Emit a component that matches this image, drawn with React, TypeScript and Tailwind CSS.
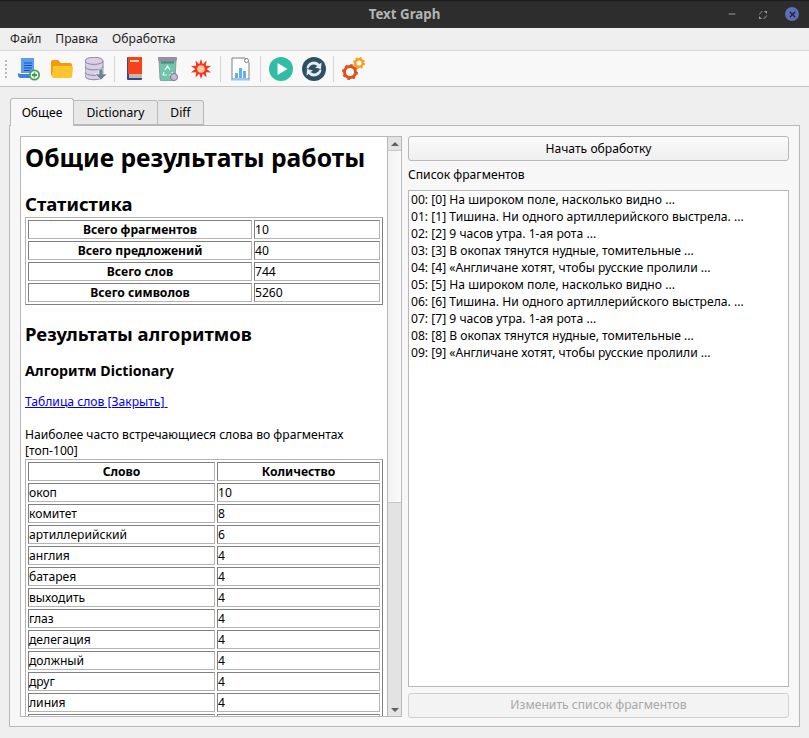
import { Minus, X } from "lucide-react";

const stats = [
  ["Всего фрагментов", "10"],
  ["Всего предложений", "40"],
  ["Всего слов", "744"],
  ["Всего символов", "5260"],
];

const words = [
  ["окоп", "10"],
  ["комитет", "8"],
  ["артиллерийский", "6"],
  ["англия", "4"],
  ["батарея", "4"],
  ["выходить", "4"],
  ["глаз", "4"],
  ["делегация", "4"],
  ["должный", "4"],
  ["друг", "4"],
  ["линия", "4"],
  ["\u00a0", "\u00a0"],
];

const fragments = [
  "00: [0] На широком поле, насколько видно ...",
  "01: [1] Тишина. Ни одного артиллерийского выстрела. ...",
  "02: [2] 9 часов утра. 1-ая рота ...",
  "03: [3] В окопах тянутся нудные, томительные ...",
  "04: [4] «Англичане хотят, чтобы русские пролили ...",
  "05: [5] На широком поле, насколько видно ...",
  "06: [6] Тишина. Ни одного артиллерийского выстрела. ...",
  "07: [7] 9 часов утра. 1-ая рота ...",
  "08: [8] В окопах тянутся нудные, томительные ...",
  "09: [9] «Англичане хотят, чтобы русские пролили ...",
];

const cell =
  "h-[19px] p-0 text-[12.13px] leading-[17px] border border-t-[#808080] border-l-[#808080] border-b-[#b4b4b4] border-r-[#b4b4b4]";

function DataTable({ rows, head, w1, w2 }: { rows: string[][]; head?: string[]; w1: string; w2: string }) {
  return (
    <table className="border-separate border-spacing-[2px] border border-t-[#b4b4b4] border-l-[#b4b4b4] border-b-[#808080] border-r-[#808080] w-[358px] table-fixed">
      <colgroup>
        <col className={w1} />
        <col className={w2} />
      </colgroup>
      <tbody>
        {head && (
          <tr>
            {head.map((h) => (
              <th key={h} className={cell + " text-center font-bold"}>
                {h}
              </th>
            ))}
          </tr>
        )}
        {rows.map((r, i) => (
          <tr key={i}>
            <td className={cell + (head ? "" : " text-center font-bold")}>{r[0]}</td>
            <td className={cell}>{r[1]}</td>
          </tr>
        ))}
      </tbody>
    </table>
  );
}

function Sep() {
  return (
    <div className="w-[7px] flex justify-center">
      <div className="w-px h-[26px] bg-[#d4d4d4]" />
    </div>
  );
}

function Tool({ children }: { children: React.ReactNode }) {
  return <div className="w-[33px] h-[26px] flex items-center justify-center">{children}</div>;
}

function Toolbar() {
  return (
    <div className="h-[37px] bg-[#f8f8f8] border-t border-t-[#d8d8d8] border-b border-b-[#c4c4c4] flex items-center">
      <div className="w-[12px] flex justify-center">
        <div className="w-[5px] h-[20px] bg-[radial-gradient(#b8b8b8_1px,transparent_1px)] bg-[length:4px_4px]" />
      </div>
      <Tool>
        <svg width="24" height="24" viewBox="0 0 24 24">
          <path d="M4 1h13v15H1V17l3-1z" fill="#5b9df0" />
          <path d="M1 17h14v4H4a3 3 0 0 1-3-3z" fill="#3f83d8" />
          <path d="M7 6h8M7 8.500h8M7 11h8M7 13.500h6" stroke="#1c4fb0" strokeWidth="1.200" />
          <circle cx="17.500" cy="18" r="5.500" fill="#3ca34a" />
          <circle cx="17.500" cy="18" r="3.800" fill="#fff" />
          <path d="M17.500 15.500v5M15 18h5" stroke="#3ca34a" strokeWidth="1.800" />
        </svg>
      </Tool>
      <Tool>
        <svg width="22" height="20" viewBox="0 0 22 20">
          <path d="M0 3a2 2 0 0 1 2-2h5l3 3h9a2 2 0 0 1 2 2v11H2a2 2 0 0 1-2-2z" fill="#f59a0c" />
          <path d="M3 7h17a2 2 0 0 1 2 2l-1 9a2 2 0 0 1-2 1H3a2 2 0 0 1-2-2l1-9z" fill="#fdc42d" />
        </svg>
      </Tool>
      <Tool>
        <svg width="22" height="24" viewBox="0 0 22 24" className="ml-[3px]">
          <path d="M0 4c0-5 18-5 18 0v15c0 5-18 5-18 0z" fill="#d9cfe8" stroke="#8d85a0" />
          <path d="M0 4c0 4.500 18 4.500 18 0M0 9.500c0 4.500 18 4.500 18 0M0 15c0 4.500 18 4.500 18 0" fill="none" stroke="#8d85a0" />
          <path d="M14 12h4v5h4l-6 6-6-6h4z" fill="#6f8298" stroke="#fff" strokeWidth=".5" />
        </svg>
      </Tool>
      <Sep />
      <Tool>
        <svg width="15" height="23" viewBox="0 0 15 23">
          <rect x="0" y="0" width="15" height="23" rx="1" fill="#2f4a8c" />
          <rect x="1" y="0" width="14" height="17" fill="#f4421d" />
          <rect x="2" y="17" width="13" height="4" fill="#c9b8a8" />
          <rect x="3" y="3" width="9" height="2" fill="#ffd3a6" />
        </svg>
      </Tool>
      <Tool>
        <svg width="20" height="24" viewBox="0 0 20 24">
          <rect x="0" y="0" width="19" height="4" rx="1" fill="#9a8fa6" />
          <path d="M1 4h17l-1 18a2 2 0 0 1-2 2H4a2 2 0 0 1-2-2z" fill="#6fc4aa" stroke="#8f8a98" strokeWidth=".8" />
          <path d="M3 4.500h13v2H3z" fill="#3e8f78" />
          <path d="M7 13l2.500-4 2.500 4M6 15l-1 3h4M14 15l1 3h-4" fill="none" stroke="#e8f8f2" strokeWidth="1.200" />
          <circle cx="16" cy="20" r="3.500" fill="#c8bcd8" stroke="#7e7090" />
        </svg>
      </Tool>
      <Tool>
        <svg width="20" height="20" viewBox="0 0 20 20">
          <path
            d="M10 0l1.800 5.300L15.500 1.500 14.800 6.700 20 7l-4.300 3L20 13.500l-5.200-.2.700 5.200-3.700-3.700L10 20l-1.800-5.200-3.700 3.700.7-5.200L0 13.500 4.300 10 0 7l5.200-.3L4.500 1.500l3.700 3.800z"
            fill="#f2361d"
          />
          <circle cx="10" cy="10" r="3.800" fill="#fbc9a0" />
        </svg>
      </Tool>
      <Sep />
      <Tool>
        <svg width="19" height="24" viewBox="0 0 19 24">
          <path d="M1 1h13l4 4v17H1z" fill="#fff" stroke="#7f7f7f" />
          <circle cx="15.500" cy="3.500" r="2" fill="#fff" stroke="#7f7f7f" />
          <rect x="4" y="16" width="3" height="5" fill="#62aef0" />
          <rect x="8" y="11" width="3" height="10" fill="#62aef0" />
          <rect x="12" y="14" width="3" height="7" fill="#62aef0" />
          <rect x="0" y="22" width="19" height="1.500" fill="#8ccaf8" />
        </svg>
      </Tool>
      <Sep />
      <Tool>
        <svg width="24" height="24" viewBox="0 0 24 24">
          <circle cx="12" cy="12" r="12" fill="#31bda5" />
          <path d="M8.500 6l10 6-10 6z" fill="#fff" />
        </svg>
      </Tool>
      <Tool>
        <svg width="24" height="24" viewBox="0 0 24 24">
          <circle cx="12" cy="12" r="12" fill="#2f4f62" />
          <path d="M4.500 11.500a7.500 7.500 0 0 1 13-4.500l2-1.500-.5 6.500-6-1.500 2.500-1.500a5.500 5.500 0 0 0-9 2.500z" fill="#e6edf0" />
          <path d="M19.500 12.500a7.500 7.500 0 0 1-13 4.500l-2 1.500.5-6.500 6 1.500-2.500 1.500a5.500 5.500 0 0 0 9-2.500z" fill="#e6edf0" />
        </svg>
      </Tool>
      <Sep />
      <Tool>
        <svg width="23" height="23" viewBox="0 0 23 23">
          <circle cx="8" cy="15" r="5.500" fill="none" stroke="#e0501a" strokeWidth="3" />
          <circle cx="8" cy="15" r="7" fill="none" stroke="#e0501a" strokeWidth="2" strokeDasharray="2.500 3" />
          <circle cx="17" cy="6" r="3.800" fill="none" stroke="#f9a11b" strokeWidth="2.500" />
          <circle cx="17" cy="6" r="5.200" fill="none" stroke="#f9a11b" strokeWidth="1.600" strokeDasharray="2 2.100" />
        </svg>
      </Tool>
    </div>
  );
}

function Arrow({ up }: { up?: boolean }) {
  return (
    <div className="h-[13px] flex items-center justify-center">
      <div
        className={
          "w-0 h-0 border-x-[4px] border-x-transparent " +
          (up ? "border-b-[4px] border-b-[#606060]" : "border-t-[4px] border-t-[#606060]")
        }
      />
    </div>
  );
}

export default function App() {
  return (
    <div className="w-[809px] h-[738px] flex flex-col overflow-hidden bg-[#efefef] text-[12.13px] text-black font-['Noto_Sans',sans-serif]">
      {/* Title bar */}
      <div className="h-[28px] shrink-0 bg-[#2d2d2d] border-t border-t-[#1c1c1c] flex items-center relative">
        <div className="w-full text-center text-[13.300px] font-bold text-[#b4b4b4]">Text Graph</div>
        <Minus size={10} strokeWidth={2.500} className="absolute left-[727px] top-[8px] text-[#999]" />
        <svg width="8" height="8" viewBox="0 0 8 8" className="absolute left-[759px] top-[10px]">
          <path d="M0 3l3-3h1L0 4zM8 5L5 8H4l4-4zM5 0h3v3zM0 8V5l3 3z" fill="#9a9a9a" />
        </svg>
        <div className="absolute left-[785px] top-[6px] w-[14px] h-[14px] rounded-full bg-[#5a6fb8] flex items-center justify-center">
          <X size={9} strokeWidth={3.500} className="text-[#20242f]" />
        </div>
      </div>

      {/* Menu */}
      <div className="h-[22px] shrink-0 flex items-center pl-[10px] gap-[14px] text-[#1c1c1c]">
        <span>Файл</span>
        <span>Правка</span>
        <span>Обработка</span>
      </div>

      <Toolbar />

      {/* Tabs */}
      <div className="flex-1 px-[9px] pt-[10px] pb-[11px] flex flex-col min-h-0">
        <div className="h-[28px] shrink-0 flex items-end pl-px relative z-10">
          <div className="w-[64px] h-[28px] pt-px bg-[#f7f7f7] border border-[#b8b8b8] border-b-0 rounded-t-[3px] flex items-center justify-center mb-[-1px]">
            Общее
          </div>
          <div className="w-[84px] h-[25px] pt-px bg-[#e8e8e8] border border-[#b8b8b8] border-l-0 rounded-tr-[3px] flex items-center justify-center">
            Dictionary
          </div>
          <div className="w-[46px] h-[25px] pt-px bg-[#e8e8e8] border border-[#b8b8b8] border-l-0 rounded-tr-[3px] flex items-center justify-center">
            Diff
          </div>
        </div>

        {/* Pane */}
        <div className="flex-1 min-h-0 bg-[#f7f7f7] border border-[#b8b8b8] pt-[10px] pl-[10px] pr-[10px] pb-[9px] flex gap-[6px]">
          {/* Left browser */}
          <div className="w-[382px] flex shrink-0 border border-[#b8b8b8] border-r-0 h-[581px]">
            <div className="w-[367px] bg-white border-r border-r-[#b8b8b8] overflow-hidden pl-[4px]">
              <h1 className="text-[24.650px] font-bold leading-[32px] mt-[5px]">Общие результаты работы</h1>
              <h2 className="text-[18.500px] font-bold leading-[24px] mt-[18px]">Статистика</h2>
              <div className="mt-[1px]">
                <DataTable rows={stats} w1="w-[224px]" w2="w-[126px]" />
              </div>
              <h2 className="text-[18.500px] font-bold leading-[24px] mt-[17px]">Результаты алгоритмов</h2>
              <h3 className="text-[14.200px] font-bold leading-[20px] mt-[15px]">Алгоритм Dictionary</h3>
              <a className="block text-[#0000ee] underline leading-[16px] mt-[13px]">Таблица слов [Закрыть]{"\u00a0"}</a>
              <p className="leading-[16px] mt-[17px] w-[340px]">Наиболее часто встречающиеся слова во фрагментах [топ-100]</p>
              <DataTable rows={words} head={["Слово", "Количество"]} w1="w-[187px]" w2="w-[163px]" />
            </div>
            <div className="w-[14px] flex flex-col border-r border-r-[#b8b8b8] bg-[#e3e3e3]">
              <Arrow up />
              <div className="h-[353px] bg-gradient-to-r from-[#f2f2f2] to-[#fbfbfb] border-y border-[#c8c8c8]" />
              <div className="flex-1" />
              <Arrow />
            </div>
          </div>

          {/* Right column */}
          <div className="flex-1 flex flex-col min-w-0 h-[582px]">
            <div className="h-[25px] shrink-0 pt-px border border-[#b8b8b8] rounded-[3px] bg-gradient-to-b from-[#fbfbfb] to-[#efefef] flex items-center justify-center">
              Начать обработку
            </div>
            <div className="h-[29px] shrink-0 flex items-center">Список фрагментов</div>
            <div className="flex-1 min-h-0 bg-white border border-[#b8b8b8] pl-[2px]">
              {fragments.map((f) => (
                <div key={f} className="h-[17px] leading-[17px]">
                  {f}
                </div>
              ))}
            </div>
            <div className="h-[25px] shrink-0 mt-[6px] border border-[#d0d0d0] rounded-[3px] bg-[#f3f3f3] flex items-center justify-center text-[#a8a8a8]">
              Изменить список фрагментов
            </div>
          </div>
        </div>
      </div>
    </div>
  );
}
